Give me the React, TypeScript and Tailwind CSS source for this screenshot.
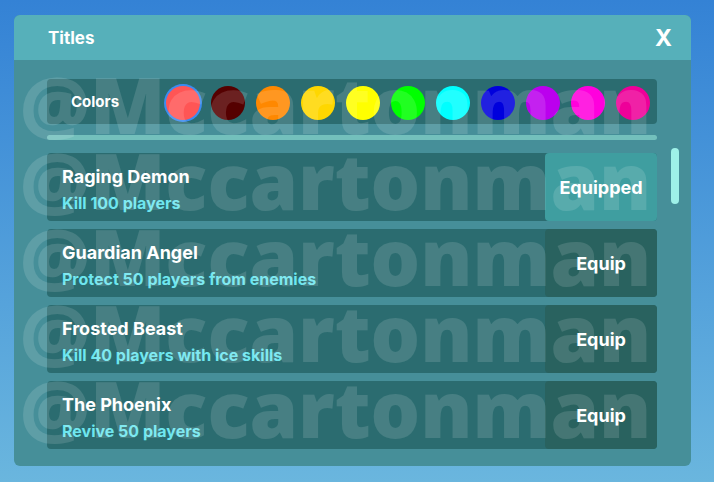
const swatches = [
  "#ff5555",
  "#550000",
  "#ff8800",
  "#ffd700",
  "#ffff00",
  "#00ff00",
  "#00ffff",
  "#0000dd",
  "#bb00ee",
  "#ff00dd",
  "#ee0099",
];

interface Title {
  name: string;
  goal: string;
  equipped?: boolean;
}

const titles: Title[] = [
  { name: "Raging Demon", goal: "Kill 100 players", equipped: true },
  { name: "Guardian Angel", goal: "Protect 50 players from enemies" },
  { name: "Frosted Beast", goal: "Kill 40 players with ice skills" },
  { name: "The Phoenix", goal: "Revive 50 players" },
];

function TitleRow({ title }: { title: Title }) {
  return (
    <div className="flex h-[68px] rounded-[4px] bg-[#2b6c70]">
      <div className="flex flex-1 flex-col justify-center pl-[15px] pt-[5px]">
        <span className="text-[18px] font-bold leading-[22px] text-white">{title.name}</span>
        <span className="mt-[5px] text-[16px] font-bold leading-[20px] text-[#6ee6ef]">
          {title.goal}
        </span>
      </div>
      <button
        className={
          title.equipped
            ? "w-[112px] rounded-[4px] bg-[#3f9ea0] text-[18px] font-bold text-white"
            : "w-[112px] rounded-[4px] bg-[#29625f] text-[18px] font-bold text-white"
        }
      >
        {title.equipped ? "Equipped" : "Equip"}
      </button>
    </div>
  );
}

export default function App() {
  return (
    <div
      className="h-[482px] w-[714px] overflow-hidden bg-gradient-to-b from-[#3482d5] to-[#6ab6de] pl-[14px] pt-[15px]"
      style={{ fontFamily: "Inter, 'Noto Sans', sans-serif" }}
    >
      <div className="flex h-[451px] w-[677px] flex-col overflow-hidden rounded-[6px] bg-[#468f99]">
        <div className="flex h-[45px] shrink-0 items-center justify-between bg-[#56b0ba] pl-[34px] pr-[19px] pt-[2px]">
          <span className="text-[17px] font-bold text-white">Titles</span>
          <span className="text-[23px] font-bold text-white">X</span>
        </div>

        <div className="relative flex-1 overflow-hidden pl-[33px] pt-[19px]">
          <div className="flex h-[45px] w-[610px] items-center rounded-[4px] bg-[#2b6c70] pl-[24px] pt-[2px]">
            <span className="w-[95px] text-[15px] font-bold text-white">Colors</span>
            <div className="flex gap-[11px]">
              {swatches.map((c, i) => (
                <div
                  key={c}
                  className={
                    i === 0
                      ? "h-[34px] w-[34px] rounded-full ring-2 ring-[#3b8cf0]"
                      : "h-[34px] w-[34px] rounded-full"
                  }
                  style={{ backgroundColor: c }}
                />
              ))}
            </div>
          </div>

          <div className="mt-[11px] h-[5px] w-[610px] rounded-full bg-[#73c0bc]" />

          <div className="mt-[8px] flex gap-[14px]">
            <div className="flex w-[610px] flex-col gap-[8px] pt-[5px]">
              {titles.map((t) => (
                <TitleRow key={t.name} title={t} />
              ))}
            </div>
            <div className="h-[56px] w-[8px] rounded-full bg-[#9ef1e8]" />
          </div>

          {/* watermark drawn over the panel body */}
          <div
            className="pointer-events-none absolute left-[6px] top-[6px] flex flex-col text-[78px] font-extrabold leading-[76px] text-white/[0.13]"
            style={{ fontFamily: "'Open Sans', sans-serif" }}
          >
            {[0, 1, 2, 3, 4].map((n) => (
              <span key={n} className="whitespace-nowrap">
                @Mccartonman
              </span>
            ))}
          </div>
        </div>
      </div>
    </div>
  );
}
